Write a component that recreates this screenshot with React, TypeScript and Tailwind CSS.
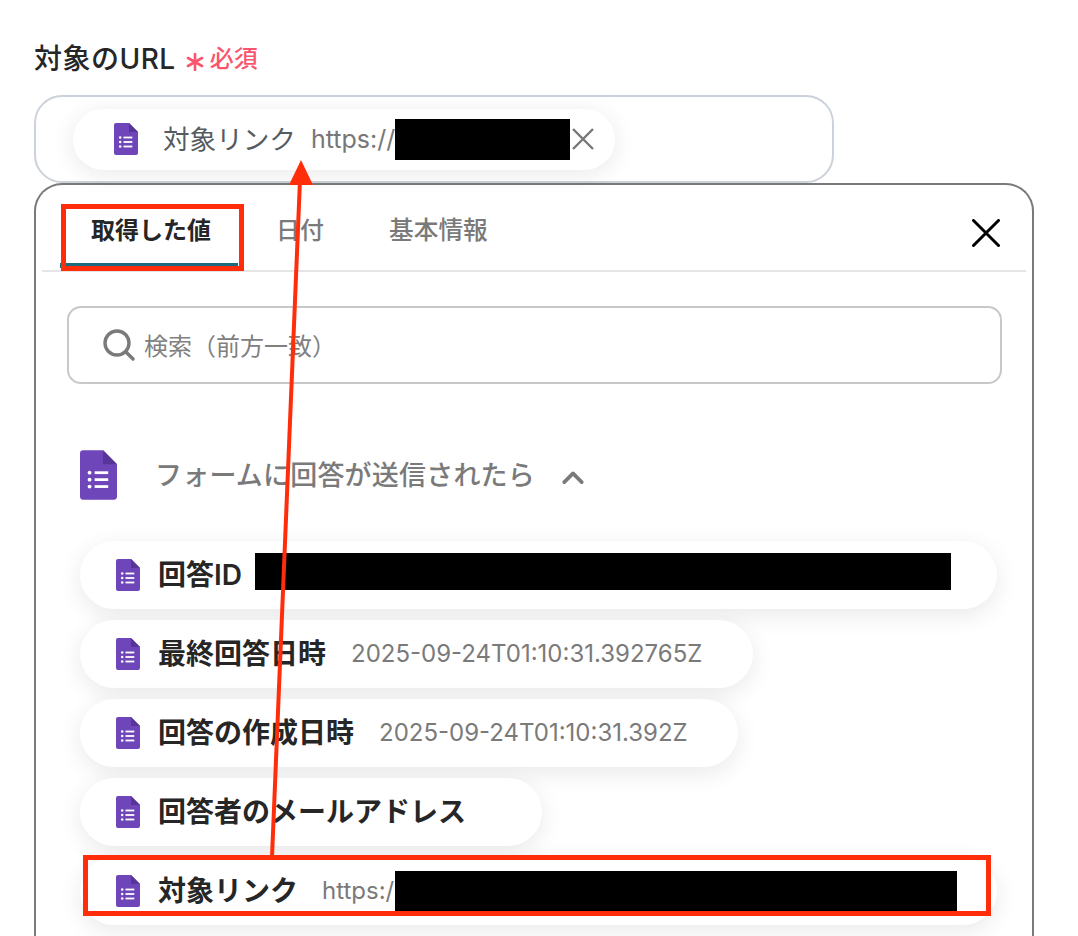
import React from 'react'

const FONT = 'font-["Inter","Noto_Sans_CJK_JP",sans-serif]'

function FormsIcon({ className }: { className: string }) {
  return (
    <svg viewBox="0 0 24 32" className={className}>
      <path d="M2 0H15L24 9V30a2 2 0 0 1-2 2H2a2 2 0 0 1-2-2V2a2 2 0 0 1 2-2z" fill="#6f46ba" />
      <path d="M15 0L24 9H15z" fill="#573497" />
      <circle cx="6.2" cy="14.5" r="1.25" fill="#fff" />
      <circle cx="6.2" cy="19" r="1.25" fill="#fff" />
      <circle cx="6.2" cy="23.5" r="1.25" fill="#fff" />
      <rect x="9.5" y="13.6" width="8.8" height="1.8" fill="#fff" />
      <rect x="9.5" y="18.1" width="8.8" height="1.8" fill="#fff" />
      <rect x="9.5" y="22.6" width="8.8" height="1.8" fill="#fff" />
    </svg>
  )
}

function Row({ label, value, width, children }: { label: string; value?: string; width: string; children?: React.ReactNode }) {
  return (
    <div className={`${width} h-[68px] shrink-0 rounded-full bg-white pl-[36px] flex items-center shadow-[0_6px_24px_rgba(0,0,0,0.09)]`}>
      <FormsIcon className="w-[24px] h-[32px] shrink-0" />
      <span className="ml-[18px] text-[28px] font-semibold text-[#262626] whitespace-nowrap">{label}</span>
      {value && <span className="ml-[25px] text-[24px] text-[#7a7a7a] whitespace-nowrap">{value}</span>}
      {children}
    </div>
  )
}

export default function App() {
  return (
    <div className={`relative w-[1078px] h-[936px] overflow-hidden bg-white pt-[43px] pl-[34px] ${FONT}`}>
      {/* Field label */}
      <div className="h-[32px] mb-[20px] flex items-center">
        <span className="text-[28px] font-medium leading-none tracking-[0.5px] text-[#262626]">対象のURL</span>
        <svg viewBox="0 0 18 18" className="w-[18px] h-[18px] ml-[10px] mt-[6px] shrink-0" stroke="#f9556d" strokeWidth="2.6" strokeLinecap="round">
          <path d="M9 1V17M2 5L16 13M16 5L2 13" />
        </svg>
        <span className="ml-[6px] text-[24px] font-medium leading-none text-[#f9556d]">必須</span>
      </div>

      {/* Selected value */}
      <div className="w-[800px] h-[88px] rounded-[28px] border-2 border-[#ccd2da] bg-white pl-[37px] flex items-center">
        <div className="w-[542px] h-[61px] rounded-full bg-white pl-[41px] flex items-center shadow-[0_4px_24px_rgba(0,0,0,0.09)]">
          <FormsIcon className="w-[24px] h-[32px] shrink-0" />
          <span className="ml-[25px] w-[133px] pt-[2px] text-[26.6px] text-[#555b60] whitespace-nowrap">対象リンク</span>
          <span className="ml-[15px] w-[84px] pt-[2px] text-[25px] text-[#777] whitespace-nowrap">https://</span>
          <div className="w-[175px] h-[41px] bg-black shrink-0" />
          <svg viewBox="0 0 24 24" className="w-[24px] h-[24px] ml-[1px] shrink-0" stroke="#777" strokeWidth="2.4" fill="none">
            <path d="M2 2L22 22M22 2L2 22" />
          </svg>
        </div>
      </div>

      {/* Value picker panel */}
      <div className="w-[1000px] h-[800px] rounded-t-[28px] border-2 border-b-0 border-[#7a7a7a] bg-white">
        <div className="mx-[6px] h-[87px] border-b-2 border-[#e5e5e5] pl-[18px] flex items-start">
          <div className="w-[178px] h-[83px] border-b-[5px] border-[#1b6b80] pt-[13px] pl-[4px] flex items-center justify-center text-[24px] font-semibold text-[#262626]">取得した値</div>
          <div className="ml-[38px] h-[83px] pt-[8px] flex items-center text-[24px] font-medium text-[#7a7a7a]">日付</div>
          <div className="ml-[65px] h-[83px] pt-[8px] flex items-center text-[24.7px] font-medium text-[#7a7a7a]">基本情報</div>
          <svg viewBox="0 0 28 28" className="w-[28px] h-[28px] ml-auto mr-[26px] mt-[34px]" stroke="#000" strokeWidth="3" strokeLinecap="round" fill="none">
            <path d="M1.5 1.5L26.5 26.5M26.5 1.5L1.5 26.5" />
          </svg>
        </div>

        <div className="ml-[31px] mt-[34px] w-[935px] h-[78px] rounded-[14px] border-2 border-[#c8c8c8] pl-[34px] flex items-center">
          <svg viewBox="0 0 32 32" className="w-[32px] h-[32px] shrink-0" stroke="#7a7a7a" strokeWidth="3.4" strokeLinecap="round" fill="none">
            <circle cx="14" cy="14" r="12" />
            <path d="M23 23L30 30" />
          </svg>
          <span className="ml-[9px] pt-[3px] text-[24px] text-[#808080] whitespace-nowrap">検索（前方一致）</span>
        </div>

        <div className="ml-[44px] mt-[66px] h-[50px] flex items-center">
          <FormsIcon className="w-[37px] h-[50px] shrink-0" />
          <span className="ml-[38px] pt-[3px] text-[27px] font-medium text-[#7a7a7a] whitespace-nowrap tracking-[0.2px]">フォームに回答が送信されたら</span>
          <svg viewBox="0 0 24 14" className="w-[22px] h-[13px] ml-[27px] mt-[4px]" stroke="#7a7a7a" strokeWidth="4" strokeLinecap="round" strokeLinejoin="round" fill="none">
            <path d="M2.5 12L12 2.5L21.5 12" />
          </svg>
        </div>

        <div className="ml-[44px] mt-[41px] flex flex-col gap-[11px]">
          <Row label="回答ID" width="w-[917px]">
            <div className="ml-[13px] mb-[7px] w-[696px] h-[37px] bg-black shrink-0" />
          </Row>
          <Row label="最終回答日時" value="2025-09-24T01:10:31.392765Z" width="w-[673px]" />
          <Row label="回答の作成日時" value="2025-09-24T01:10:31.392Z" width="w-[658px]" />
          <Row label="回答者のメールアドレス" width="w-[462px]" />
          <Row label="対象リンク" width="w-[917px]">
            <span className="ml-[24px] w-[73px] text-[24px] text-[#7a7a7a] whitespace-nowrap">https:/</span>
            <div className="w-[562px] h-[41px] bg-black shrink-0" />
          </Row>
        </div>
      </div>

      {/* Red annotations */}
      <div className="absolute left-[61px] top-[204px] w-[183px] h-[67px] border-[5px] border-[#ff2d0a]" />
      <div className="absolute left-[83px] top-[855px] w-[908px] h-[61px] border-[5px] border-[#ff2d0a]" />
      <svg viewBox="0 0 1078 936" className="absolute inset-0 w-[1078px] h-[936px] pointer-events-none">
        <path d="M272 857L300 180" stroke="#ff2d0a" strokeWidth="4" />
        <path d="M301 160L289 185H313z" fill="#ff2d0a" />
      </svg>
    </div>
  )
}
